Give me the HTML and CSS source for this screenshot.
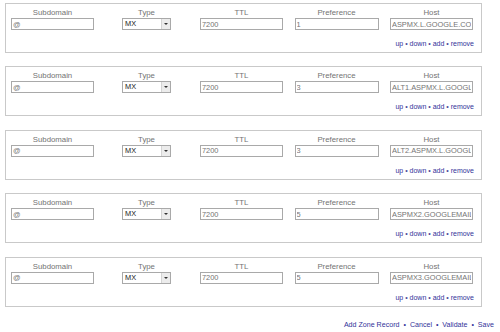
FILE: index.html
```html
<!DOCTYPE html>
<html>
<head>
<meta charset="utf-8">
<link rel="stylesheet" href="styles.css">
</head>
<body>
<div class="page">
  <div class="record">
    <div class="fields">
      <div class="cell"><span class="label">Subdomain</span><input class="inp" value="@"></div>
      <div class="cell"><span class="label">Type</span><div class="select"><span class="sel-text">MX</span><span class="sel-btn"><span class="tri"></span></span></div></div>
      <div class="cell"><span class="label">TTL</span><input class="inp" value="7200"></div>
      <div class="cell"><span class="label">Preference</span><input class="inp wide" value="1"></div>
      <div class="cell"><span class="label">Host</span><input class="inp" value="ASPMX.L.GOOGLE.COM"></div>
    </div>
    <div class="actions"><a>up</a> • <a>down</a> • <a>add</a> • <a>remove</a></div>
  </div>
  <div class="record">
    <div class="fields">
      <div class="cell"><span class="label">Subdomain</span><input class="inp" value="@"></div>
      <div class="cell"><span class="label">Type</span><div class="select"><span class="sel-text">MX</span><span class="sel-btn"><span class="tri"></span></span></div></div>
      <div class="cell"><span class="label">TTL</span><input class="inp" value="7200"></div>
      <div class="cell"><span class="label">Preference</span><input class="inp wide" value="3"></div>
      <div class="cell"><span class="label">Host</span><input class="inp" value="ALT1.ASPMX.L.GOOGLE.COM"></div>
    </div>
    <div class="actions"><a>up</a> • <a>down</a> • <a>add</a> • <a>remove</a></div>
  </div>
  <div class="record">
    <div class="fields">
      <div class="cell"><span class="label">Subdomain</span><input class="inp" value="@"></div>
      <div class="cell"><span class="label">Type</span><div class="select"><span class="sel-text">MX</span><span class="sel-btn"><span class="tri"></span></span></div></div>
      <div class="cell"><span class="label">TTL</span><input class="inp" value="7200"></div>
      <div class="cell"><span class="label">Preference</span><input class="inp wide" value="3"></div>
      <div class="cell"><span class="label">Host</span><input class="inp" value="ALT2.ASPMX.L.GOOGLE.COM"></div>
    </div>
    <div class="actions"><a>up</a> • <a>down</a> • <a>add</a> • <a>remove</a></div>
  </div>
  <div class="record">
    <div class="fields">
      <div class="cell"><span class="label">Subdomain</span><input class="inp" value="@"></div>
      <div class="cell"><span class="label">Type</span><div class="select"><span class="sel-text">MX</span><span class="sel-btn"><span class="tri"></span></span></div></div>
      <div class="cell"><span class="label">TTL</span><input class="inp" value="7200"></div>
      <div class="cell"><span class="label">Preference</span><input class="inp wide" value="5"></div>
      <div class="cell"><span class="label">Host</span><input class="inp" value="ASPMX2.GOOGLEMAIL.COM"></div>
    </div>
    <div class="actions"><a>up</a> • <a>down</a> • <a>add</a> • <a>remove</a></div>
  </div>
  <div class="record">
    <div class="fields">
      <div class="cell"><span class="label">Subdomain</span><input class="inp" value="@"></div>
      <div class="cell"><span class="label">Type</span><div class="select"><span class="sel-text">MX</span><span class="sel-btn"><span class="tri"></span></span></div></div>
      <div class="cell"><span class="label">TTL</span><input class="inp" value="7200"></div>
      <div class="cell"><span class="label">Preference</span><input class="inp wide" value="5"></div>
      <div class="cell"><span class="label">Host</span><input class="inp" value="ASPMX3.GOOGLEMAIL.COM"></div>
    </div>
    <div class="actions"><a>up</a> • <a>down</a> • <a>add</a> • <a>remove</a></div>
  </div>
  <div class="footer"><a>Add Zone Record</a> &nbsp;•&nbsp; <a>Cancel</a> &nbsp;•&nbsp; <a>Validate</a> &nbsp;•&nbsp; <a>Save</a></div>
</div>
</body>
</html>
```

FILE: styles.css
```css
html, body {
  margin: 0;
  padding: 0;
  background: #ffffff;
}
.page {
  width: 500px;
  height: 332px;
  padding: 3px 0 0 5px;
  box-sizing: border-box;
  font-family: "Liberation Sans", Arial, sans-serif;
  display: flex;
  flex-direction: column;
  gap: 13.5px;
}
.record {
  width: 477px;
  height: 50px;
  box-sizing: border-box;
  border: 1px solid #c9c9c9;
  display: flex;
  flex-direction: column;
}
.fields {
  display: grid;
  grid-template-columns: 93px 95px 95px 95px 95px;
  padding-top: 3px;
}
.cell {
  display: flex;
  flex-direction: column;
  align-items: center;
}
.label {
  font-size: 7.8px;
  line-height: 11px;
  color: #737373;
}
.inp {
  width: 83px;
  height: 12px;
  box-sizing: border-box;
  border: 1px solid #a9a9a9;
  padding: 0 1px;
  margin: 0;
  font-family: "Liberation Sans", Arial, sans-serif;
  font-size: 7.4px;
  color: #747474;
  background: #fff;
  outline: none;
}
.inp.wide {
  width: 84px;
}
.select {
  width: 49px;
  height: 12px;
  box-sizing: border-box;
  border: 1px solid #a9a9a9;
  display: flex;
  align-items: stretch;
  background: #fff;
}
.sel-text {
  flex: 1;
  font-size: 7.4px;
  line-height: 10px;
  padding-left: 2px;
  color: #222;
}
.sel-btn {
  width: 8px;
  background: #ececec;
  border-left: 1px solid #d4d4d4;
  display: flex;
  align-items: center;
  justify-content: center;
}
.tri {
  width: 0;
  height: 0;
  border-left: 2px solid transparent;
  border-right: 2px solid transparent;
  border-top: 2px solid #333;
}
.actions {
  margin-top: auto;
  padding: 0 7px 4px 0;
  text-align: right;
  font-size: 7px;
  line-height: 9px;
  color: #4a4a9a;
}
.actions a, .footer a {
  color: #33339a;
}
.footer {
  margin-top: auto;
  padding: 0 6px 2px 0;
  text-align: right;
  font-size: 7.1px;
  line-height: 10px;
  color: #33339a;
}
```
